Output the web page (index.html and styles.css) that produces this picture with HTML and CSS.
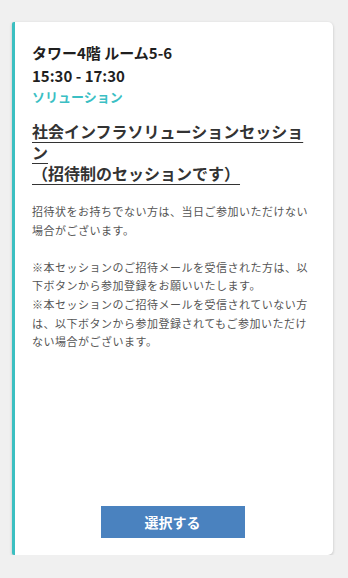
FILE: index.html
```html
<!DOCTYPE html>
<html lang="ja">
<head>
    <meta charset="UTF-8">
    <meta name="viewport" content="width=device-width, initial-scale=1.0">
    <title>セッション詳細</title>
    <link rel="stylesheet" href="styles.css">
</head>
<body>
    <div class="session-card">
        <div class="session-place">タワー4階 ルーム5-6</div>
        <div class="session-time">15:30 - 17:30</div>
        <div class="session-track">ソリューション</div>

        <h2 class="session-title">社会インフラソリューションセッション<br>（招待制のセッションです）</h2>

        <p class="session-note">
            招待状をお持ちでない方は、当日ご参加いただけない場合がございます。<br>
            <br>
            ※本セッションのご招待メールを受信された方は、以下ボタンから参加登録をお願いいたします。<br>
            ※本セッションのご招待メールを受信されていない方は、以下ボタンから参加登録されてもご参加いただけない場合がございます。
        </p>

        <div class="actions">
            <button type="button" class="btn">選択する</button>
        </div>
    </div>
</body>
</html>
```

FILE: styles.css
```css
body {
    font-family: 'Noto Sans CJK JP', 'Noto Sans', sans-serif;
    background-color: #f0f0f0;
    color: #222;
    margin: 0;
    padding: 22px 15px 0 12px;
}
.session-card {
    display: flex;
    flex-direction: column;
    height: 533px;
    box-sizing: border-box;
    background-color: #fff;
    border-left: 3px solid #3bbfc1;
    border-radius: 2px 5px 5px 2px;
    box-shadow: 0 1px 3px rgba(0, 0, 0, 0.22);
    padding: 19px 20px 17px 17px;
}
.session-place, .session-time {
    font-size: 15px;
    font-weight: bold;
    line-height: 23px;
    color: #1f1f1f;
}
.session-track {
    font-size: 13px;
    font-weight: bold;
    line-height: 20px;
    color: #3bbfc4;
}
.session-title {
    margin: 14px 0 0;
    font-size: 16px;
    font-weight: bold;
    line-height: 21px;
    color: #333;
    text-decoration: underline;
    text-decoration-thickness: 1px;
    text-underline-offset: 4px;
}
.session-note {
    margin: 18px 0 0;
    font-size: 11px;
    letter-spacing: 0.5px;
    line-height: 18.6px;
    color: #555;
}
.actions {
    margin-top: auto;
    display: flex;
    justify-content: center;
}
.btn {
    width: 144px;
    height: 32px;
    border: none;
    background-color: #4a82bf;
    color: #fff;
    font-family: inherit;
    font-size: 14px;
    font-weight: bold;
    cursor: pointer;
}
```
